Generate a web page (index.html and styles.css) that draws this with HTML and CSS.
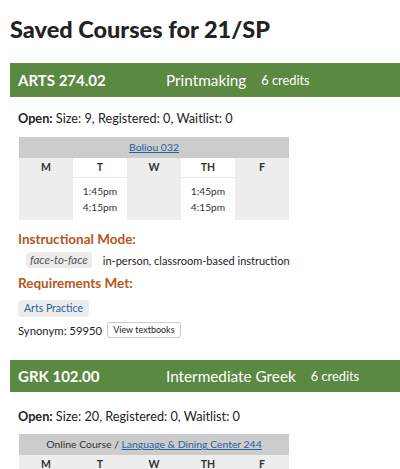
FILE: index.html
```html
<!DOCTYPE html>
<html>
<head>
<meta charset="utf-8">
<link rel="stylesheet" href="styles.css">
</head>
<body>
<h1 class="title">Saved Courses for 21/SP</h1>

<section class="course">
  <div class="course-head">
    <span class="code">ARTS 274.02</span>
    <span class="name">Printmaking</span>
    <span class="credits">6 credits</span>
  </div>
  <div class="course-body">
    <p class="status"><b>Open:</b> Size: 9, Registered: 0, Waitlist: 0</p>
    <div class="sched">
      <div class="loc"><a href="#">Boliou 032</a></div>
      <div class="days">
        <div class="day off"><div class="dname">M</div><div class="times"></div></div>
        <div class="day on"><div class="dname">T</div><div class="times">1:45pm<br>4:15pm</div></div>
        <div class="day off"><div class="dname">W</div><div class="times"></div></div>
        <div class="day on"><div class="dname">TH</div><div class="times">1:45pm<br>4:15pm</div></div>
        <div class="day off"><div class="dname">F</div><div class="times"></div></div>
      </div>
    </div>
    <h3 class="label label-mode">Instructional Mode:</h3>
    <div class="mode"><span class="chip-i">face-to-face</span><span class="mode-desc">in-person, classroom-based instruction</span></div>
    <h3 class="label label-req">Requirements Met:</h3>
    <div class="reqs"><span class="chip-r">Arts Practice</span></div>
    <div class="syn"><span>Synonym: 59950</span><button class="btn">View textbooks</button></div>
  </div>
</section>

<section class="course">
  <div class="course-head">
    <span class="code">GRK 102.00</span>
    <span class="name">Intermediate Greek</span>
    <span class="credits">6 credits</span>
  </div>
  <div class="course-body">
    <p class="status"><b>Open:</b> Size: 20, Registered: 0, Waitlist: 0</p>
    <div class="sched">
      <div class="loc">Online Course / <a href="#">Language &amp; Dining Center 244</a></div>
      <div class="days">
        <div class="day off"><div class="dname">M</div><div class="times"></div></div>
        <div class="day off"><div class="dname">T</div><div class="times"></div></div>
        <div class="day off"><div class="dname">W</div><div class="times"></div></div>
        <div class="day off"><div class="dname">TH</div><div class="times"></div></div>
        <div class="day off"><div class="dname">F</div><div class="times"></div></div>
      </div>
    </div>
  </div>
</section>
</body>
</html>
```
FILE: styles.css
```css
html, body {
  margin: 0;
  padding: 0;
  background: #fff;
}
body {
  font-family: Lato, "Liberation Sans", sans-serif;
  color: #222;
  padding-left: 10px;
  overflow: hidden;
  height: 469px;
}
.title {
  font-size: 23.5px;
  font-weight: 900;
  margin: 0;
  padding-top: 15px;
  height: 48px;
  line-height: 28px;
  color: #222;
}
.course {
  margin-bottom: 22px;
}
.course-head {
  background: #5a8a42;
  color: #fff;
  height: 34px;
  display: flex;
  align-items: center;
  padding-left: 8px;
}
.course + .course .course-head {
  height: 32px;
}
.code {
  font-weight: 700;
  font-size: 15px;
  width: 148px;
}
.name {
  font-size: 15.3px;
  margin-right: 15px;
}
.credits {
  font-size: 12.8px;
}
.course-body {
  padding: 0 8px;
}
.status {
  font-size: 12.7px;
  margin: 13px 0 11px;
  line-height: 16px;
}
.course + .course .status {
  margin-top: 16px;
  margin-bottom: 10px;
}
.sched {
  width: 270px;
  margin-left: 1px;
  font-size: 10.5px;
}
.loc {
  background: #cccccc;
  height: 21px;
  line-height: 21px;
  text-align: center;
  color: #333;
  font-size: 10.4px;
}
.loc a {
  color: #2a5ea0;
}
.days {
  display: grid;
  grid-template-columns: repeat(5, 1fr);
}
.day.off { background: #ededed; }
.day.on { background: #fff; }
.dname {
  font-weight: 700;
  text-align: center;
  height: 19px;
  line-height: 19px;
  font-size: 10.5px;
  color: #333;
}
.day.on .dname { border-bottom: 1px solid #ececec; }
.times {
  text-align: center;
  height: 42px;
  line-height: 16px;
  padding-top: 5px;
  box-sizing: border-box;
  font-size: 10.2px;
  color: #333;
}
.label {
  color: #b5561c;
  font-size: 13.5px;
  font-weight: 700;
  margin: 0 0 4px;
  line-height: 18px;
}
.label-mode { margin-top: 10px; }
.label-req { margin-top: 6px; }
.mode {
  display: flex;
  align-items: center;
  font-size: 11px;
  padding-left: 8px;
  color: #222;
}
.chip-i {
  background: #ececec;
  border-radius: 4px;
  font-style: italic;
  color: #555;
  padding: 2px 4px;
  line-height: 12px;
  font-size: 11.5px;
  margin-right: 11px;
}
.reqs {
  margin-top: 2px;
  height: 17px;
}
.chip-r {
  display: inline-block;
  background: #ececec;
  border-radius: 4px;
  color: #2a5ea0;
  font-size: 10.5px;
  padding: 0 6px;
  line-height: 17px;
  height: 17px;
}
.syn {
  font-size: 11.3px;
  margin-top: 9px;
  display: flex;
  align-items: center;
  gap: 5px;
  height: 16px;
}
.btn {
  font-family: inherit;
  font-size: 9px;
  background: #fff;
  border: 1px solid #ccc;
  border-radius: 3px;
  padding: 0 5px;
  height: 16px;
  line-height: 14px;
  color: #222;
}
```
